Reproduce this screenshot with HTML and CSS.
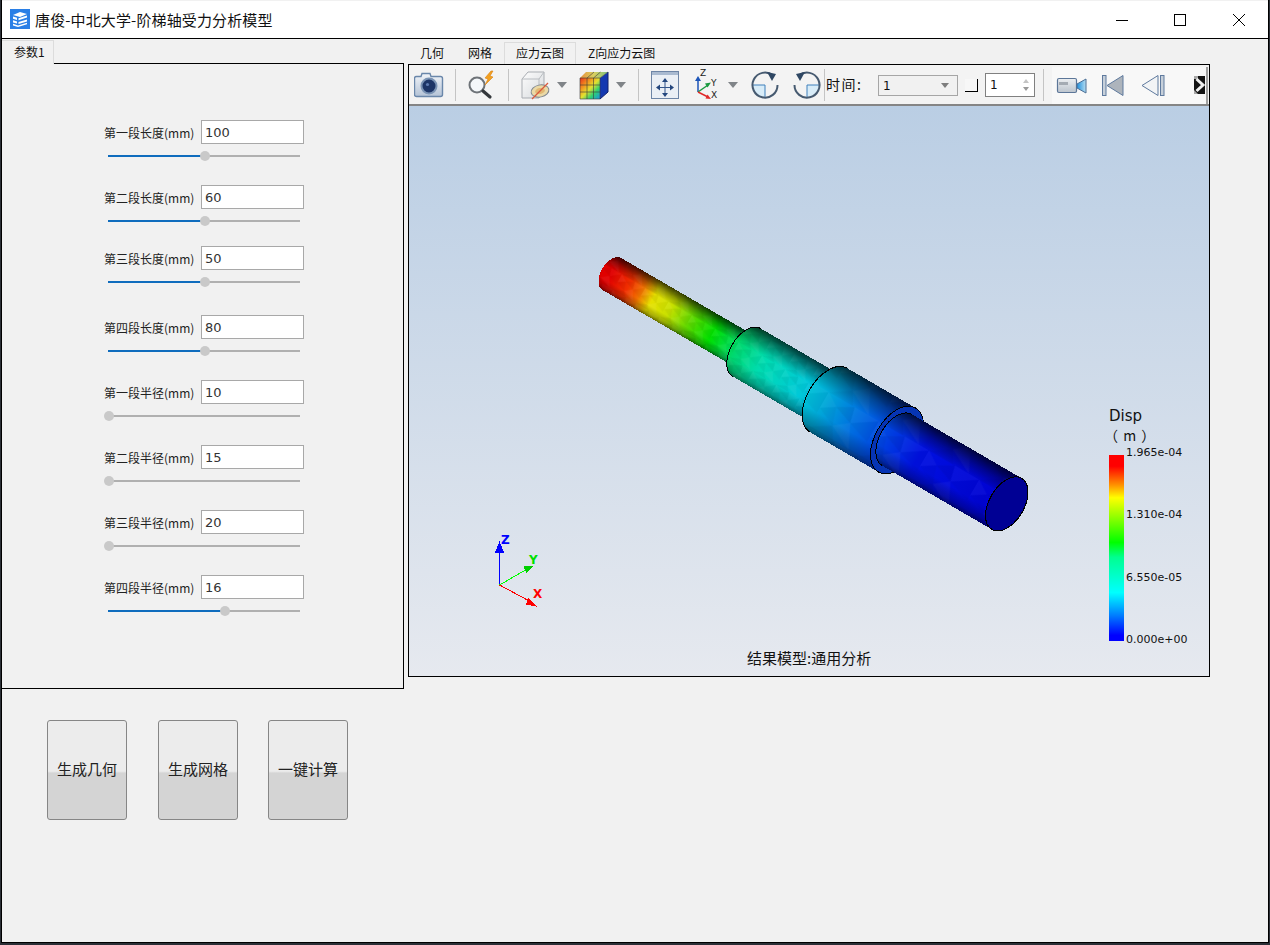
FILE: index.html
```html
<!DOCTYPE html>
<html lang="zh">
<head>
<meta charset="utf-8">
<title>唐俊-中北大学-阶梯轴受力分析模型</title>
<link rel="stylesheet" href="styles.css">
</head>
<body>
<div class="window">
  <header class="titlebar">
    <svg class="app-icon" width="20" height="20" viewBox="0 0 20 20">
      <rect width="20" height="20" fill="#2a7fe6"/>
      <path d="M3 6l7-3 7 2-7 3z" fill="#fff"/>
      <path d="M3 7.500l4 1.200v2.200l-4-1.200zM8.500 9.200l8.500-2.600v2l-8.500 2.600zM3 11.200l4 1.200v2.200l-4-1.200zM8.500 13l8.500-2.600v2L8.500 15zM3 14.800l5 1.700 9-2.800v1.600L8 18l-5-1.600z" fill="#fff"/>
    </svg>
    <span class="title">唐俊-中北大学-阶梯轴受力分析模型</span>
    <div class="win-controls">
      <svg width="59" height="38" viewBox="0 0 59 38"><path d="M22 19.500h12" stroke="#000" fill="none"/></svg>
      <svg width="59" height="38" viewBox="0 0 59 38"><rect x="21.500" y="13.500" width="11" height="11" stroke="#000" fill="none"/></svg>
      <svg width="56" height="38" viewBox="0 0 56 38"><path d="M21 13l12 12M33 13L21 25" stroke="#000" fill="none"/></svg>
    </div>
  </header>

  <main class="workspace">
    <section class="left-col">
      <div class="left-tabs"><div class="left-tab">参数1</div></div>
      <div class="param-panel">
        <div class="field">
          <div class="field-row"><label class="field-label">第一段长度(mm)</label><div class="field-input">100</div></div>
          <div class="slider"><div class="slider-fill" style="width:50.5%"><span class="slider-knob"></span></div></div>
        </div>
        <div class="field">
          <div class="field-row"><label class="field-label">第二段长度(mm)</label><div class="field-input">60</div></div>
          <div class="slider"><div class="slider-fill" style="width:50.5%"><span class="slider-knob"></span></div></div>
        </div>
        <div class="field field-tight">
          <div class="field-row"><label class="field-label">第三段长度(mm)</label><div class="field-input">50</div></div>
          <div class="slider"><div class="slider-fill" style="width:50.5%"><span class="slider-knob"></span></div></div>
        </div>
        <div class="field field-loose">
          <div class="field-row"><label class="field-label">第四段长度(mm)</label><div class="field-input">80</div></div>
          <div class="slider"><div class="slider-fill" style="width:50.5%"><span class="slider-knob"></span></div></div>
        </div>
        <div class="field">
          <div class="field-row"><label class="field-label">第一段半径(mm)</label><div class="field-input">10</div></div>
          <div class="slider"><div class="slider-fill" style="width:0.5%"><span class="slider-knob"></span></div></div>
        </div>
        <div class="field">
          <div class="field-row"><label class="field-label">第二段半径(mm)</label><div class="field-input">15</div></div>
          <div class="slider"><div class="slider-fill" style="width:0.5%"><span class="slider-knob"></span></div></div>
        </div>
        <div class="field">
          <div class="field-row"><label class="field-label">第三段半径(mm)</label><div class="field-input">20</div></div>
          <div class="slider"><div class="slider-fill" style="width:0.5%"><span class="slider-knob"></span></div></div>
        </div>
        <div class="field">
          <div class="field-row"><label class="field-label">第四段半径(mm)</label><div class="field-input">16</div></div>
          <div class="slider"><div class="slider-fill" style="width:61%"><span class="slider-knob"></span></div></div>
        </div>
      </div>
      <div class="actions">
        <button class="action-btn">生成几何</button>
        <button class="action-btn">生成网格</button>
        <button class="action-btn">一键计算</button>
      </div>
    </section>

    <section class="right-col">
      <nav class="view-tabs">
        <div class="view-tab">几何</div>
        <div class="view-tab">网格</div>
        <div class="view-tab active">应力云图</div>
        <div class="view-tab">Z向应力云图</div>
      </nav>
      <div class="viewer">
        <div class="toolbar">
          <!-- camera -->
          <svg width="41" height="38" viewBox="414 66 41 38">
            <defs>
              <linearGradient id="gBody" x1="0" y1="0" x2="0" y2="1"><stop offset="0" stop-color="#f2f5f9"/><stop offset="1" stop-color="#b4c3d6"/></linearGradient>
              <linearGradient id="gCube" x1="0" y1="0" x2="1" y2="1"><stop offset="0" stop-color="#fdfdfd"/><stop offset="1" stop-color="#d6d9dc"/></linearGradient>
              <linearGradient id="gRain" x1="0" y1="0" x2="1" y2="1"><stop offset="0" stop-color="#e8301c"/><stop offset=".3" stop-color="#f09a20"/><stop offset=".5" stop-color="#e4e030"/><stop offset=".72" stop-color="#30d070"/><stop offset="1" stop-color="#1890e8"/></linearGradient>
              <linearGradient id="gRainTop" x1="0" y1="0" x2="1" y2="0"><stop offset="0" stop-color="#e8903c"/><stop offset=".5" stop-color="#d8d060"/><stop offset="1" stop-color="#78c080"/></linearGradient>
              <linearGradient id="gLens" x1="0" y1="0" x2="1" y2="0"><stop offset="0" stop-color="#1f8fdc"/><stop offset="1" stop-color="#b8dff2"/></linearGradient>
              <linearGradient id="gVid" x1="0" y1="0" x2="0" y2="1"><stop offset="0" stop-color="#eceff2"/><stop offset="1" stop-color="#bcc4cd"/></linearGradient>
            </defs>
            <path d="M418 76.500h3l1-3h8l1 3h9.500a2 2 0 0 1 2 2v16a2 2 0 0 1-2 2h-24a2 2 0 0 1-2-2v-16a2 2 0 0 1 2-2z" fill="url(#gBody)" stroke="#6a87aa" stroke-width="1.400"/>
            <circle cx="429" cy="86" r="7.500" fill="#1d3567" stroke="#7a93b4" stroke-width="2"/>
            <circle cx="427.500" cy="84.500" r="1.600" fill="#5e7bb0"/>
          </svg>
          <span class="tool-sep"></span>
          <!-- probe -->
          <svg width="52" height="38" viewBox="456 66 52 38">
            <circle cx="477" cy="85" r="7.500" fill="#f4f7fa" stroke="#6e7378" stroke-width="2"/>
            <path d="M483 91l7 6" stroke="#33373b" stroke-width="3.200" stroke-linecap="round"/>
            <path d="M491 71l-6 7 3 1-3 6 8-8-3-1 3-5z" fill="#f2a020" stroke="#d98010" stroke-width=".6"/>
          </svg>
          <span class="tool-sep"></span>
          <!-- clip cube -->
          <svg width="47" height="38" viewBox="509 66 47 38">
            <path d="M522 79l6-7h16v20l-5 6h-17z" fill="url(#gCube)" stroke="#a9adb2"/>
            <path d="M522 79h17v19M539 79l5-7" fill="none" stroke="#b8bcc0"/>
            <ellipse cx="540" cy="91" rx="9" ry="6" fill="#ead9a6" stroke="#7f868e" transform="rotate(-12 540 91)"/>
            <ellipse cx="540" cy="91" rx="5" ry="3" fill="#e2b874" transform="rotate(-12 540 91)"/>
            <path d="M532 99l16-16" stroke="#d9583c" stroke-width="1.200"/>
          </svg>
          <svg width="23" height="38" viewBox="556 66 23 38"><path d="M557 82h10l-5 6z" fill="#808488"/></svg>
          <!-- colour cube -->
          <svg width="36" height="38" viewBox="579 66 36 38">
            <path d="M600 78l8-6v20l-8 7z" fill="#1438b0"/>
            <path d="M580 78l6-6h22l-8 6z" fill="url(#gRainTop)"/>
            <rect x="580" y="78" width="20" height="21" fill="url(#gRain)"/>
            <path d="M580 78h20v21h-20zM587 78v21M593.500 78v21M580 85h20M580 92h20M600 78l8-6M587 78l7-6M593.500 78l7-6" fill="none" stroke="#3a3a3a" stroke-opacity=".75" stroke-width=".8"/>
            <path d="M608 72v20l-8 7" fill="none" stroke="#10206a"/>
          </svg>
          <svg width="23" height="38" viewBox="615 66 23 38"><path d="M616 82h10l-5 6z" fill="#808488"/></svg>
          <span class="tool-sep"></span>
          <!-- fit -->
          <svg width="53" height="38" viewBox="639 66 53 38">
            <rect x="651.500" y="71.500" width="27" height="27" fill="#eaeff5" stroke="#6d85a6"/>
            <rect x="652" y="72" width="26" height="3" fill="#a9bad0"/>
            <path d="M665 79v16M657 87.500h16" stroke="#33558a"/>
            <path d="M665 78l-3 4h6zM665 97l-3-4h6zM656 87.500l4-3v6zM674 87.500l-4-3v6z" fill="#24477e"/>
          </svg>
          <!-- axes -->
          <svg width="34" height="38" viewBox="692 66 34 38">
            <path d="M698 92V80" stroke="#1c55b8" stroke-width="1.500"/><path d="M698 76l-3 5h6z" fill="#1c55b8"/>
            <path d="M698 92l10-7" stroke="#1b9a40" stroke-width="1.500"/><path d="M711 82.500l-6 1 2.500 4z" fill="#1b9a40"/>
            <path d="M698 92l10 5" stroke="#e02a2a" stroke-width="1.500"/><path d="M711 99l-5.500-.5 2-4z" fill="#e02a2a"/>
            <text class="axis-mini" x="700" y="76">Z</text>
            <text class="axis-mini" x="711" y="86">Y</text>
            <text class="axis-mini" x="711" y="98">X</text>
          </svg>
          <svg width="23" height="38" viewBox="726 66 23 38"><path d="M728 82h10l-5 6z" fill="#808488"/></svg>
          <!-- rotate -->
          <svg width="41" height="38" viewBox="749 66 41 38">
            <path d="M752 85h13v12a12.500 12.500 0 0 1-13-12z" fill="#d8ecf8"/>
            <path d="M752 85h13v12" fill="none" stroke="#3f80bc"/>
            <path d="M773 75.500a12.500 12.500 0 1 0 4.500 9.500" fill="none" stroke="#465a70" stroke-width="2"/>
            <path d="M767 72l9 2-4 7z" fill="#2f4763"/>
          </svg>
          <svg width="34" height="38" viewBox="790 66 34 38">
            <path d="M819 85h-12v12a12.500 12.500 0 0 0 12-12z" fill="#d8ecf8"/>
            <path d="M819 85h-12v12" fill="none" stroke="#3f80bc"/>
            <path d="M799 75.500a12.500 12.500 0 1 1-4.500 9.500" fill="none" stroke="#465a70" stroke-width="2"/>
            <path d="M805 72l-9 2 4 7z" fill="#2f4763"/>
          </svg>
          <span class="tool-sep"></span>
          <span class="time-label">时间:</span>
          <div class="combo"><span>1</span><i class="combo-arrow"></i></div>
          <span class="mini-btn"></span>
          <div class="spin"><span>1</span><div class="spin-arrows"><i class="up"></i><i class="down"></i></div></div>
          <span class="tool-sep sep-end"></span>
          <div class="media-tools">
            <svg width="40" height="36" viewBox="1052 67 40 36">
              <rect x="1057.500" y="78.500" width="19" height="14" rx="1.500" fill="url(#gVid)" stroke="#5c7698" stroke-width="1.200"/>
              <rect x="1059" y="82" width="9" height="3" fill="#a4abb3"/>
              <path d="M1077 84l9-5v14l-9-5z" fill="url(#gLens)" stroke="#4d6f95"/>
            </svg>
            <svg width="41" height="36" viewBox="1092 67 41 36">
              <rect x="1102.500" y="75.500" width="3.500" height="20" fill="#c7d0da" stroke="#5f7a9e"/>
              <path d="M1123 75.500v20L1107 85.500z" fill="#adb4bc" stroke="#5f7a9e"/>
            </svg>
            <svg width="41" height="36" viewBox="1133 67 41 36">
              <path d="M1158 75.500v20L1142 85.500z" fill="#f2f4f6" stroke="#5f7a9e"/>
              <rect x="1160.500" y="75.500" width="3.500" height="20" fill="#c7d0da" stroke="#5f7a9e"/>
            </svg>
            <svg width="32" height="36" viewBox="1174 67 32 36">
              <rect x="1194" y="76" width="11" height="18" fill="#141414"/>
              <path d="M1194 76h4v3h-4zM1194 90l4 4h-4z" fill="#a8a8a8"/>
              <path d="M1196.500 79l6.500 6-6.500 6" fill="none" stroke="#f0f0f0" stroke-width="3"/>
            </svg>
          </div>
        </div>

        <div class="canvas">
          <svg class="scene" width="800" height="570" viewBox="409 106 800 570">
            <defs>
              <linearGradient id="disp" gradientUnits="userSpaceOnUse" x1="-6" y1="0" x2="450" y2="0">
                <stop offset="0" stop-color="#e00000"/><stop offset=".046" stop-color="#f03000"/>
                <stop offset=".075" stop-color="#f07000"/><stop offset=".105" stop-color="#e6e000"/>
                <stop offset=".15" stop-color="#c8e000"/><stop offset=".2" stop-color="#60d800"/>
                <stop offset=".257" stop-color="#00e000"/><stop offset=".32" stop-color="#00d870"/>
                <stop offset=".384" stop-color="#00dcb0"/><stop offset=".489" stop-color="#00c8d8"/>
                <stop offset=".546" stop-color="#00a8d8"/><stop offset=".623" stop-color="#0070e0"/>
                <stop offset=".702" stop-color="#0040e0"/><stop offset=".783" stop-color="#0010e0"/>
                <stop offset="1" stop-color="#0000d0"/>
              </linearGradient>
              <linearGradient id="shade" x1="0" y1="0" x2="0" y2="1">
                <stop offset="0" stop-color="#000" stop-opacity=".72"/><stop offset=".2" stop-color="#000" stop-opacity=".32"/>
                <stop offset=".4" stop-color="#000" stop-opacity="0"/><stop offset=".72" stop-color="#000" stop-opacity="0"/>
                <stop offset=".92" stop-color="#000" stop-opacity=".25"/><stop offset="1" stop-color="#000" stop-opacity=".5"/>
              </linearGradient>
              <pattern id="facetsSmall" patternUnits="userSpaceOnUse" width="27" height="18" patternTransform="translate(3 -5)">
                <path d="M0 0l7 4.500L0 9z" fill="#fff" fill-opacity=".05"/>
                <path d="M7 4.500l8-4.500 2 8z" fill="#000" fill-opacity=".05"/>
                <path d="M15 0h12L17 8z" fill="#fff" fill-opacity=".03"/>
                <path d="M0 9l7-4.500 3 9z" fill="#000" fill-opacity=".04"/>
                <path d="M17 8l10-8v12z" fill="#000" fill-opacity=".03"/>
                <path d="M10 13.500l7-5.500 6 10z" fill="#fff" fill-opacity=".05"/>
                <path d="M0 18l10-4.500 4 4.500z" fill="#000" fill-opacity=".05"/>
              </pattern>
              <pattern id="facetsLarge" patternUnits="userSpaceOnUse" width="58" height="40" patternTransform="translate(9 -7)">
                <path d="M0 0l14 9L0 18z" fill="#fff" fill-opacity=".035"/>
                <path d="M14 9l16-9 4 16z" fill="#000" fill-opacity=".05"/>
                <path d="M30 0h28L34 16z" fill="#fff" fill-opacity=".03"/>
                <path d="M0 18l14-9 6 18z" fill="#000" fill-opacity=".03"/>
                <path d="M34 16l24-16v24z" fill="#000" fill-opacity=".03"/>
                <path d="M20 27l14-11 12 24z" fill="#fff" fill-opacity=".04"/>
                <path d="M0 40l20-13 8 13z" fill="#000" fill-opacity=".04"/>
              </pattern>
            </defs>
            <g class="shaft" transform="translate(617 277) rotate(30.2)">
              <g>
                <path d="M-6 -18.500L150 -18.500A11 18.500 0 0 1 150 18.500L-6 18.500A11 18.500 0 0 1 -6 -18.500Z" fill="url(#disp)"/>
                <path d="M-6 -18.500L150 -18.500A11 18.500 0 0 1 150 18.500L-6 18.500A11 18.500 0 0 1 -6 -18.500Z" fill="url(#facetsSmall)"/>
                <path d="M-6 -18.500L150 -18.500A11 18.500 0 0 1 150 18.500L-6 18.500A11 18.500 0 0 1 -6 -18.500Z" fill="url(#shade)"/>
              </g>
              <g>
                <path d="M150 -27.750L245 -27.750A16.400 27.750 0 0 1 245 27.750L150 27.750A16.400 27.750 0 0 1 150 -27.750Z" fill="url(#disp)"/>
                <path d="M150 -27.750L245 -27.750A16.400 27.750 0 0 1 245 27.750L150 27.750A16.400 27.750 0 0 1 150 -27.750Z" fill="url(#facetsSmall)"/>
                <path d="M150 -27.750L245 -27.750A16.400 27.750 0 0 1 245 27.750L150 27.750A16.400 27.750 0 0 1 150 -27.750Z" fill="url(#shade)"/>
                <path class="edge" d="M150 -27.750A16.400 27.750 0 0 0 150 27.750"/>
              </g>
              <g>
                <path d="M245 -37L324 -37A21.800 37 0 0 1 324 37L245 37A21.800 37 0 0 1 245 -37Z" fill="url(#disp)"/>
                <path d="M245 -37L324 -37A21.800 37 0 0 1 324 37L245 37A21.800 37 0 0 1 245 -37Z" fill="url(#facetsLarge)"/>
                <path d="M245 -37L324 -37A21.800 37 0 0 1 324 37L245 37A21.800 37 0 0 1 245 -37Z" fill="url(#shade)"/>
                <path class="edge" d="M245 -37A21.800 37 0 0 0 245 37"/>
                <ellipse class="edge" cx="324" cy="0" rx="21.800" ry="37"/>
              </g>
              <g>
                <path d="M324 -29.600L451 -29.600A17.500 29.600 0 0 1 451 29.600L324 29.600A17.500 29.600 0 0 1 324 -29.600Z" fill="url(#disp)"/>
                <path d="M324 -29.600L451 -29.600A17.500 29.600 0 0 1 451 29.600L324 29.600A17.500 29.600 0 0 1 324 -29.600Z" fill="url(#facetsLarge)"/>
                <path d="M324 -29.600L451 -29.600A17.500 29.600 0 0 1 451 29.600L324 29.600A17.500 29.600 0 0 1 324 -29.600Z" fill="url(#shade)"/>
                <path class="edge" d="M324 -29.600A17.500 29.600 0 0 0 324 29.600"/>
                <ellipse cx="451" cy="0" rx="17.500" ry="29.600" fill="#000094" stroke="#000" stroke-width="1"/>
              </g>
            </g>
            <!-- triad -->
            <g class="triad">
              <path d="M499.500 585V550" stroke="#0000ff"/>
              <path d="M499.500 541l-4.500 11.500h9z" fill="#0000ff"/>
              <path d="M499.500 585l26-15" stroke="#00ff00"/>
              <path d="M533 566l-9.500 .5 3 7z" fill="#00d000"/>
              <path d="M499.500 585l28 15" stroke="#ff0000"/>
              <path d="M538 607l-10-9.500-2 7z" fill="#ff0000"/>
              <text class="axis-z" x="501" y="544">Z</text>
              <text class="axis-y" x="529" y="564">Y</text>
              <text class="axis-x" x="533" y="598">X</text>
            </g>
          </svg>
          <div class="legend">
            <div class="legend-title">Disp</div>
            <div class="legend-unit">（ m ）</div>
            <div class="legend-body">
              <div class="legend-bar"></div>
              <div class="legend-labels">
                <span>1.965e-04</span><span>1.310e-04</span><span>6.550e-05</span><span>0.000e+00</span>
              </div>
            </div>
          </div>
          <div class="caption">结果模型:通用分析</div>
        </div>
      </div>
    </section>
  </main>
</div>
</body>
</html>
```
FILE: styles.css
```css
* { box-sizing: border-box; }
html, body { margin: 0; height: 100%; }
body {
  background: #2b2f36;
  padding: 0 1px 1px 1px;
  font-family: "Noto Sans CJK SC", "Noto Sans", sans-serif;
  color: #111;
  overflow: hidden;
}
.window {
  height: 943px;
  width: 1268px;
  padding-top: 1px;
  border: 1px solid #000;
  border-top: 0;
  background: #f1f1f1;
  display: flex;
  flex-direction: column;
}
.titlebar {
  height: 38px;
  flex: none;
  background: #fff;
  border-bottom: 1px solid #000;
  display: flex;
  align-items: center;
  padding-left: 8px;
}
.app-icon { flex: none; margin-top: -1px; }
.title { margin-left: 5px; font-size: 15px; letter-spacing: .13px; line-height: 20px; color: #111; }
.win-controls { margin-left: auto; display: flex; }
.win-controls svg { display: block; }

.workspace { flex: 1; display: flex; align-items: flex-start; gap: 4px; }
.left-col { width: 402px; flex: none; }
.left-tabs { height: 24px; margin-top: 1px; display: flex; position: relative; z-index: 1; }
.left-tab {
  width: 52px;
  height: 24px;
  background: #f1f1f1;
  border-top: 1px solid #dcdcdc;
  border-right: 1px solid #dcdcdc;
  font-size: 12px;
  line-height: 22px;
  padding-left: 12px;
}
.param-panel {
  margin-top: -1px;
  height: 626px;
  border: 1px solid #000;
  border-left: 0;
  padding-top: 56px;
}
.field { margin-top: 24px; height: 41px; }
.field:first-child { margin-top: 0; }
.field-tight { margin-top: 20px; }
.field-loose { margin-top: 28px; }
.field-row { display: flex; align-items: center; height: 24px; margin-left: 102px; }
.field-label { width: 90px; font-size: 12px; white-space: nowrap; color: #222; }
.field-input {
  margin-left: 7px;
  width: 103px;
  height: 24px;
  border: 1px solid #a8a8a8;
  background: #fff;
  font-family: "DejaVu Sans", sans-serif;
  font-size: 13px;
  line-height: 24px;
  padding-left: 3px;
  color: #333;
}
.slider {
  margin: 7px 0 0 106px;
  width: 192px;
  height: 10px;
  position: relative;
  background: linear-gradient(#b0b0b0, #b0b0b0) center / 100% 2px no-repeat;
}
.slider-fill {
  height: 2px;
  position: absolute;
  left: 0;
  top: 4px;
  background: #0f6cbd;
}
.slider-knob {
  position: absolute;
  right: -5px;
  top: -4px;
  width: 10px;
  height: 10px;
  border-radius: 50%;
  background: #c9c9c9;
}
.actions { display: flex; margin: 31px 0 0 45px; }
.action-btn {
  width: 80px;
  height: 100px;
  margin-right: 31px;
  border: 1px solid #868686;
  border-radius: 3px;
  background: linear-gradient(#ececec 0, #ececec 51%, #e4e4e4 52%, #d4d4d4 53%, #d4d4d4 100%);
  font-family: inherit;
  font-size: 15px;
  color: #222;
  padding: 0 0 3px;
}
.action-btn:nth-child(2) { margin-right: 30px; }

.right-col { width: 802px; flex: none; }
.view-tabs { height: 25px; display: flex; align-items: flex-end; }
.view-tab {
  padding: 0 12px;
  height: 22px;
  font-size: 12px;
  line-height: 22px;
  white-space: nowrap;
}
.view-tab.active {
  border: 1px solid #dcdcdc;
  border-bottom: 0;
  padding: 0 11px;
  line-height: 20px;
}
.viewer { width: 802px; height: 613px; border: 1px solid #000; display: flex; flex-direction: column; }
.toolbar {
  height: 41px;
  flex: none;
  display: flex;
  align-items: flex-start;
  padding: 1px 0 0 5px;
  background: #f3f3f3;
  border-bottom: 2px solid #858585;
}
.toolbar > svg, .media-tools svg { display: block; flex: none; }
.axis-mini { font-family: "DejaVu Sans", sans-serif; font-size: 9px; fill: #222; }
.tool-sep { flex: none; width: 1px; height: 32px; margin-top: 3px; background: #c4c4c4; }
.time-label { flex: none; width: 52px; margin-left: 1px; font-size: 14px; line-height: 36px; letter-spacing: 1.500px; color: #111; }
.combo {
  flex: none;
  width: 80px;
  height: 21px;
  margin-top: 9px;
  border: 1px solid #a6a6a6;
  background: #f1f1f1;
  display: flex;
  align-items: center;
  justify-content: space-between;
  padding: 0 8px 0 4px;
  font-family: "DejaVu Sans", sans-serif;
  font-size: 12px;
}
.combo-arrow { width: 0; height: 0; border: 4.500px solid transparent; border-top: 5px solid #7d7d7d; border-bottom: 0; }
.mini-btn {
  flex: none;
  width: 13px;
  height: 13px;
  margin: 13px 0 0 7px;
  border-right: 1px solid #000;
  border-bottom: 1px solid #000;
  background: #f7f7f7;
}
.spin {
  flex: none;
  width: 50px;
  height: 24px;
  margin: 7px 0 0 7px;
  border: 1px solid #808080;
  background: #fff;
  display: flex;
  align-items: center;
  justify-content: space-between;
  padding: 0 5px 0 4px;
  font-family: "DejaVu Sans", sans-serif;
  font-size: 12px;
}
.spin-arrows { display: flex; flex-direction: column; gap: 4px; }
.spin-arrows i { display: block; width: 0; height: 0; border: 3px solid transparent; }
.spin-arrows .up { border-bottom: 4px solid #c4c4c4; border-top: 0; }
.spin-arrows .down { border-top: 4px solid #9a9a9a; border-bottom: 0; }
.sep-end { margin-left: 8px; }
.media-tools {
  flex: none;
  display: flex;
  margin-left: 8px;
  height: 37px;
  margin-top: 1px;
  background: #f8f8f8;
  border-right: 2px solid #a0a0a0;
}

.canvas {
  flex: 1;
  position: relative;
  background: linear-gradient(#bacee4, #e6e9ef);
}
.scene { position: absolute; left: 0; top: 0; display: block; }
.shaft { shape-rendering: crispEdges; }
.edge { fill: none; stroke: #000; stroke-width: 1; }
ellipse.edge { fill: #0634b4; }
.triad { shape-rendering: crispEdges; }
.triad text { font-family: "DejaVu Sans", sans-serif; font-weight: 700; font-size: 12px; }
.axis-z { fill: #0000ff; }
.axis-y { fill: #00e000; }
.axis-x { fill: #ff0000; }
.legend { position: absolute; left: 700px; top: 301px; width: 90px; font-family: "DejaVu Sans", sans-serif; color: #111; }
.legend-title { font-size: 15px; line-height: 18px; }
.legend-unit { font-family: "Noto Sans CJK SC", sans-serif; font-size: 14px; letter-spacing: 1px; line-height: 19px; margin-top: 1px; margin-left: -5px; white-space: nowrap; }
.legend-body { display: flex; margin-top: 10px; }
.legend-bar {
  width: 15px;
  height: 186px;
  background: linear-gradient(#ff0000 0, #ff0000 6%, #ff9000 16%, #ffff00 23%, #00ff00 47%, #00ff90 55%, #00ffff 74%, #0080ff 86%, #0000ff 97%, #0000ff 100%);
}
.legend-labels {
  margin: -10px 0 0 2px;
  height: 203px;
  display: flex;
  flex-direction: column;
  justify-content: space-between;
  font-size: 11px;
  line-height: 16px;
  white-space: nowrap;
}
.caption { position: absolute; left: 338px; top: 541px; font-size: 15px; line-height: 22px; color: #111; white-space: nowrap; }
```
